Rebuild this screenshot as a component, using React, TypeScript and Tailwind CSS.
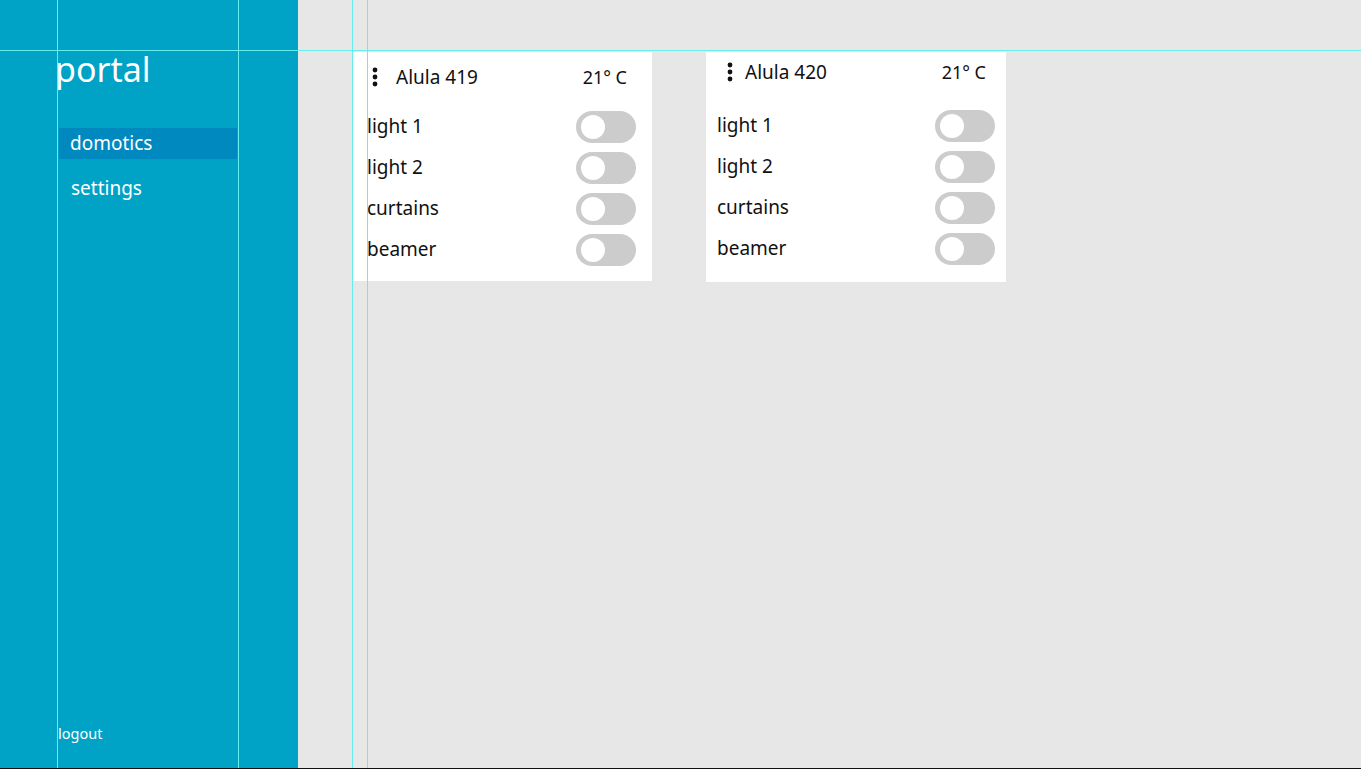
import React from "react";

const font = { fontFamily: '"Noto Sans", "Open Sans", sans-serif' };

function Dots() {
  return (
    <svg width="6" height="20" viewBox="0 0 6 20" className="block">
      <circle cx="3" cy="3" r="2.4" fill="#111" />
      <circle cx="3" cy="10" r="2.4" fill="#111" />
      <circle cx="3" cy="17" r="2.4" fill="#111" />
    </svg>
  );
}

function Toggle() {
  return (
    <div className="w-[60px] h-[32px] rounded-full bg-[#cccccc] flex items-center pl-[5px]">
      <div className="w-[24px] h-[24px] rounded-full bg-white" />
    </div>
  );
}

const items = ["light 1", "light 2", "curtains", "beamer"];

function Card1() {
  return (
    <div className="w-[299px] h-[229px] bg-white mt-[52px] flex flex-col">
      <div className="h-[50px] flex items-center pl-[19px] pr-[25px]">
        <Dots />
        <span className="ml-[18px] text-[19px] text-[#111]">Alula 419</span>
        <span className="ml-auto text-[18px] text-[#111]">21° C</span>
      </div>
      <div className="mt-[4px] flex flex-col">
        {items.map((t) => (
          <div key={t} className="h-[41px] flex items-center pl-[14px] pr-[16px]">
            <span className="text-[19px] text-[#111]">{t}</span>
            <div className="ml-auto">
              <Toggle />
            </div>
          </div>
        ))}
      </div>
    </div>
  );
}

function Card2() {
  return (
    <div className="w-[300px] h-[230px] bg-white mt-[52px] ml-[54px] flex flex-col">
      <div className="h-[40px] flex items-center pl-[21px] pr-[20px]">
        <Dots />
        <span className="ml-[12px] text-[19px] text-[#111]">Alula 420</span>
        <span className="ml-auto text-[18px] text-[#111]">21° C</span>
      </div>
      <div className="mt-[13px] flex flex-col">
        {items.map((t) => (
          <div key={t} className="h-[41px] flex items-center pl-[11px] pr-[11px]">
            <span className="text-[19px] text-[#111]">{t}</span>
            <div className="ml-auto">
              <Toggle />
            </div>
          </div>
        ))}
      </div>
    </div>
  );
}

export default function App() {
  return (
    <div
      className="relative w-[1361px] h-[769px] bg-[#e7e7e7] border-b border-[#111] flex overflow-hidden"
      style={font}
    >
      <aside className="w-[298px] h-full bg-[#00a2c6] flex flex-col text-white">
        <div className="pl-[55px] pt-[45px] text-[34px] leading-[48px]">portal</div>
        <nav className="mt-[35px] flex flex-col">
          <div className="ml-[59px] w-[178px] h-[31px] bg-[#0089bf] flex items-center pl-[11px] text-[19px]">
            domotics
          </div>
          <div className="ml-[59px] w-[178px] h-[31px] mt-[14px] flex items-center pl-[12px] text-[19px]">
            settings
          </div>
        </nav>
        <div className="mt-auto mb-[25px] pl-[58px] text-[14.5px] leading-[20px]">logout</div>
      </aside>
      <main className="flex items-start pl-[55px]">
        <Card1 />
        <Card2 />
      </main>
      <div className="pointer-events-none absolute inset-0">
        <div className="absolute left-0 right-0 top-[50px] h-px bg-[#66eeee]" />
        <div className="absolute top-0 bottom-0 left-[57px] w-px bg-[#66eeee]" />
        <div className="absolute top-0 bottom-0 left-[238px] w-px bg-[#66eeee]" />
        <div className="absolute top-0 bottom-0 left-[352px] w-px bg-[#66eeee]" />
        <div className="absolute top-0 bottom-0 left-[367px] w-px bg-[#66eeee]" />
      </div>
    </div>
  );
}
